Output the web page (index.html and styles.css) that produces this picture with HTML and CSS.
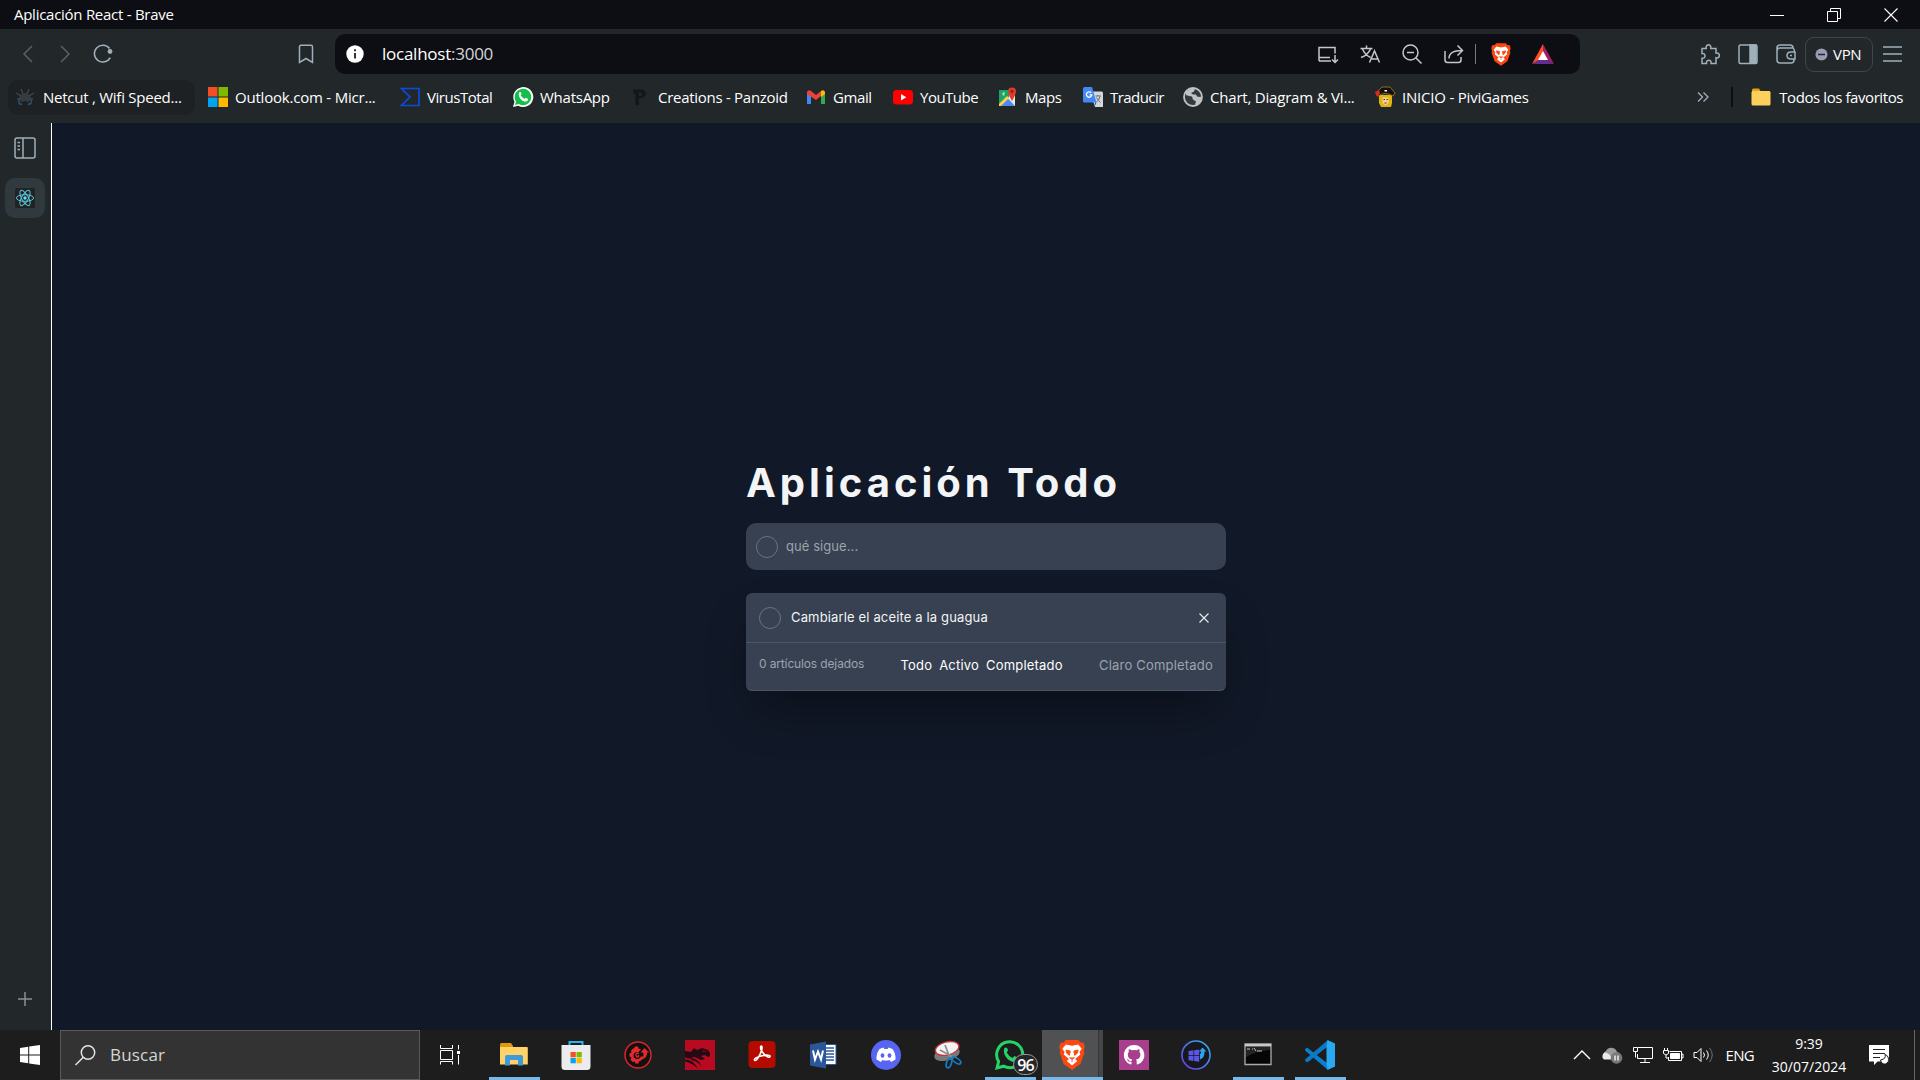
FILE: index.html
```html
<!DOCTYPE html>
<html lang="es">
<head>
<meta charset="utf-8">
<title>Aplicación React</title>
<link rel="stylesheet" href="styles.css">
</head>
<body>
<div class="screen">
  <header class="titlebar">
    <span class="window-title">Aplicación React - Brave</span>
    <div class="window-buttons">
      <svg width="14" height="14" viewBox="0 0 14 14"><path d="M0 7.500h14" stroke="#fff"/></svg>
      <svg width="14" height="14" viewBox="0 0 14 14" fill="none" stroke="#fff"><path d="M.5 3.500h10v10h-10zM3.500 3V.5h10v10H11"/></svg>
      <svg width="14" height="14" viewBox="0 0 14 14"><path d="M.5.5l13 13M13.500.5l-13 13" stroke="#fff" stroke-width="1.100"/></svg>
    </div>
  </header>

  <nav class="toolbar">
    <div class="nav-buttons">
      <svg class="dim" width="20" height="20" viewBox="0 0 20 20"><path d="M15 2L7 10l8 8"/></svg>
      <svg class="dim" width="20" height="20" viewBox="0 0 20 20"><path d="M7 2l8 8-8 8"/></svg>
      <svg class="reload" width="20" height="20" viewBox="0 0 20 20"><path d="M17.200 13.600A8.400 8.400 0 1 1 16.500 4.500" /><circle cx="17" cy="7.500" r="2.400" fill="#9fb0ba" stroke="none"/></svg>
    </div>
    <svg class="save" width="16" height="20" viewBox="0 0 16 20"><path d="M1.500 3Q1.500 1.300 3 1.300h10q1.500 0 1.500 1.700v15.500L8 14.500l-6.500 4z"/></svg>
    <div class="omnibox">
      <svg class="info" width="18" height="18" viewBox="0 0 18 18"><circle cx="9" cy="9" r="8.700" fill="#fff"/><path d="M8 4.300h2v2H8zM8 8h2v5.500H8z" fill="#33343a"/></svg>
      <span class="url">localhost<span class="port">:3000</span></span>
      <div class="omni-actions">
        <svg width="20" height="20" viewBox="0 0 20 20"><path d="M1 13.500V3.500h16v6M1 13.500h11M1 17h12M1 13v4M17 11v7M14 15.500l3 3 3-3"/></svg>
        <svg width="20" height="20" viewBox="0 0 20 20"><path d="M.5 4.500h12M6.500 1.500v3M2.500 5q2.500 6 8 8.500M10.500 5Q8 11 1 13.500M9.500 18.500L14.500 7l5 11.500M11 15h7"/></svg>
        <svg width="20" height="20" viewBox="0 0 20 20"><circle cx="8.500" cy="8.500" r="7.500"/><path d="M5 8.500h7M14 14l5.500 5.500"/></svg>
        <svg width="20" height="20" viewBox="0 0 20 20"><path d="M1 7v9q0 2.500 2.500 2.500h11q2.500 0 2.500-2.500v-3M5 14.500Q5 6.500 18 6.500M13.500 1.500l5 5-5 5"/></svg>
      </div>
      <i class="omni-sep"></i>
      <svg class="shield" width="20" height="23" viewBox="0 0 30 34"><use href="#brave"/></svg>
      <svg class="bat" width="22" height="20" viewBox="0 0 22 20"><path d="M11 0L0 20l7-4 4-8z" fill="#ff4f1f"/><path d="M11 0l11 20-7-4-4-8z" fill="#9e1f63"/><path d="M0 20h22l-7-4H7z" fill="#662d91"/><path d="M11 7l5 9H6z" fill="#fff"/></svg>
    </div>
    <div class="side-actions">
      <svg width="20" height="21" viewBox="0 0 20 21"><path d="M2 4.500h4.200c-1-5 5.600-5 4.600 0H16v4.600c4.500-1 4.500 5.700 0 4.700V19.500h-5c1-4.500-5.300-4.500-4.500 0H2v-5.200c4 .8 4-5.600 0-4.800z"/></svg>
      <svg width="20" height="21" viewBox="0 0 20 21"><rect x="1" y="1" width="18" height="18.500" rx="1.500"/><path d="M12 1h6v18h-6z" fill="#9fb0ba"/></svg>
      <svg width="20" height="21" viewBox="0 0 20 21"><path d="M1 3v13q0 3 3 3h11q3 0 3-3v-1M1 4q0-3 3-3h10q3 0 3 3H4M4 4Q1 4 1 7M17 4q1.500 1 1.500 4M19 8h-4q-4 0-4 3.500t4 3.500h4zM14 11.500h2"/></svg>
    </div>
    <div class="vpn"><svg width="13" height="13" viewBox="0 0 13 13"><circle cx="6.500" cy="6.500" r="6" fill="#9b9cb4"/><path class="dash" d="M3 6.500h7"/></svg><span>VPN</span></div>
    <svg class="menu" width="20" height="16" viewBox="0 0 20 16"><path d="M0 1h19M0 8h19M0 15h19"/></svg>
  </nav>

  <nav class="bookmarks">
    <a class="bm netcut"><svg width="20" height="20" viewBox="0 0 20 20"><path d="M5 8l5-2 5 2 1 4-3 3-3-1-3 1-3-3z" fill="#353b40"/><path d="M6 2l2 5M14 2l-2 5M1 6l5 3M19 6l-5 3M2 12h4M18 12h-4" fill="none" stroke="#41474b" stroke-width="1.300"/><path d="M4 13q-1 5 3 4M16 13q1 5-3 4" fill="none" stroke="#24577c" stroke-width="1.500"/></svg><span>Netcut , Wifi Speed...</span></a>
    <a class="bm outlook"><svg width="20" height="20" viewBox="0 0 20 20"><path d="M0 0h9.500v9.500H0z" fill="#f25022"/><path d="M10.500 0H20v9.500h-9.500z" fill="#7fba00"/><path d="M0 10.500h9.500V20H0z" fill="#00a4ef"/><path d="M10.500 10.500H20V20h-9.500z" fill="#ffb900"/></svg><span>Outlook.com - Micr...</span></a>
    <a class="bm virus"><svg width="20" height="20" viewBox="0 0 20 20"><path d="M1.500 1.500H19v17H1.500L10 10z" fill="none" stroke="#0b4dda" stroke-width="1.700"/></svg><span>VirusTotal</span></a>
    <a class="bm whats"><svg width="20" height="20" viewBox="0 0 20 20"><path d="M0 20l1.500-5.200A10 10 0 1 1 5.300 18.700z" fill="#fff"/><path d="M2 18l1-3.400a8.300 8.300 0 1 1 2.600 2.500z" fill="#12c04a"/><path d="M6.200 5.500c1.500-1 2 0 2.300 1.500L7.700 8.300q1.300 2.600 3.800 3.600l1.200-1.200 2.500 1.200c0 2-2 3-3.700 2.600C8 13.500 4.500 9 6.200 5.500z" fill="#fff"/></svg><span>WhatsApp</span></a>
    <a class="bm panz"><svg width="20" height="20" viewBox="0 0 20 20"><path d="M2 2.500h9q4.500 1 3.500 5.500-1 3.500-6.500 3V18H4.500V6.500H2zM8 5.500v3.500h2.500V5.500z" fill="#141617"/></svg><span>Creations - Panzoid</span></a>
    <a class="bm gmail"><svg width="20" height="20" viewBox="0 0 20 20"><path d="M1 5v12h4V9z" fill="#4285f4"/><path d="M15 9v8h4V5z" fill="#34a853"/><path d="M15 5v5l4-3V5q-1-3-4-1z" fill="#fbbc04"/><path d="M1 7V5q1-3 4-1l5 4 5-4v5l-5 4z" fill="#ea4335"/></svg><span>Gmail</span></a>
    <a class="bm yt"><svg width="20" height="20" viewBox="0 0 20 20"><rect y="3" width="20" height="14.500" rx="3.500" fill="#f00"/><path d="M8 7l5.300 3.200L8 13.400z" fill="#fff"/></svg><span>YouTube</span></a>
    <a class="bm maps"><svg width="20" height="20" viewBox="0 0 20 20"><path d="M1 3h16v16H1z" fill="#e8e8e8"/><path d="M1 3h11l-1 7-10 9z" fill="#1da462"/><path d="M2 19l7.500-8 7.500 8z" fill="#4c8bf5"/><path d="M1 17l8-8 2 2-8 8H1z" fill="#ffd04b"/><path d="M14 14Q10 7 10 4.500a4 4 0 0 1 8 0Q18 7 14 14z" fill="#de3b2c"/><circle cx="14" cy="4.500" r="1.400" fill="#7d1f16"/><path d="M7 6H5v2h1.500" fill="none" stroke="#d8f0e0"/></svg><span>Maps</span></a>
    <a class="bm trad"><svg width="20" height="20" viewBox="0 0 20 20"><path d="M7 4.500h11.500q1.500 0 1.500 1.500v14h-8z" fill="#d5d7da"/><path d="M1.500 0H9l4.500 15.500h-12Q0 15.500 0 14V1.500Q0 0 1.500 0z" fill="#4389f5"/><path d="M12 15.500h1.500L11.500 20z" fill="#1b57c0"/><path d="M8.200 5.800a2.700 2.700 0 1 0 .6 2H6.500" fill="none" stroke="#fff" stroke-width="1.300"/><path d="M12.500 9H18M15 8v1M17 9.500q-1 4-3.500 5.500M13.500 10.500q1.500 3 4 5" fill="none" stroke="#65717c"/></svg><span>Traducir</span></a>
    <a class="bm chart"><svg width="20" height="20" viewBox="0 0 20 20"><circle cx="10" cy="10" r="9" fill="#353a3d" stroke="#bfc3c8" stroke-width="1.800"/><path d="M3 5l4-3 5-.5-1 3-3 1.500 2 1.500 3 0 1 2 3 .5 2-1-1 5-4 4.500-2-1 1-3-3-2-1-3-3-.5-3-1z" fill="#bfc3c8"/></svg><span>Chart, Diagram &amp; Vi...</span></a>
    <a class="bm pivi"><svg width="20" height="20" viewBox="0 0 20 20"><path d="M4 8h13v8l-1 4H6l-2-4z" fill="#e3b50c"/><path d="M7.500 10.500h6V16l-3 2.500-3-2.500z" fill="#f4cf98"/><path d="M2 5l5-5h8l5 6-2 3Q10 4 3 9z" fill="#151010" stroke="#9b7722" stroke-width=".9"/><path d="M0 5l4-2 1 3-3 4z" fill="#d92b20"/><path d="M9.500 3h2.500v1.500H9.500z" fill="#fff"/><path d="M8.500 12.500h1.500M11.500 12.500H13M9.500 16h2" stroke="#5b3515"/></svg><span>INICIO - PiviGames</span></a>
    <svg class="more" width="12" height="12" viewBox="0 0 12 12"><path d="M1 1.500L5.500 6 1 10.500M6.500 1.500L11 6l-4.500 4.500"/></svg>
    <i class="bm-sep"></i>
    <a class="bm all"><svg width="20" height="20" viewBox="0 0 20 20"><path d="M1 3q0-1.500 1.500-1.500H8L9.500 4H18q1 0 1 1v3H1z" fill="#e8a012"/><rect x=".5" y="4" width="19" height="14.500" rx="1.500" fill="#fdd05c"/></svg><span>Todos los favoritos</span></a>
  </nav>

  <div class="body">
    <aside class="tabs">
      <svg class="panel" width="22" height="22" viewBox="0 0 22 22"><rect x="1" y="1" width="20" height="20" rx="2"/><path d="M9 1v20M3.500 5.500H6M3.500 9H6M3.500 12.500H6"/></svg>
      <div class="tab"><svg width="20" height="20" viewBox="0 0 20 20"><rect width="20" height="20" rx="2" fill="#222"/><g fill="none" stroke="#58c4dc" stroke-width="1"><ellipse cx="10" cy="10" rx="8.600" ry="3.300"/><ellipse cx="10" cy="10" rx="8.600" ry="3.300" transform="rotate(60 10 10)"/><ellipse cx="10" cy="10" rx="8.600" ry="3.300" transform="rotate(120 10 10)"/></g><circle cx="10" cy="10" r="1.700" fill="#61dafb"/></svg></div>
      <svg class="add" width="14" height="14" viewBox="0 0 14 14"><path d="M0 7h14M7 0v14" stroke="#8a9094" stroke-width="1.500"/></svg>
    </aside>
    <main class="app">
      <section class="todo">
        <h1>Aplicación Todo</h1>
        <div class="entry"><i class="ring"></i><span>qué sigue...</span></div>
        <div class="card">
          <div class="item"><i class="ring"></i><span>Cambiarle el aceite a la guagua</span>
            <svg width="10" height="10" viewBox="0 0 10 10"><path d="M.5.5l9 9M9.500.5l-9 9" stroke="#eceef1" stroke-width="1.100"/></svg></div>
          <div class="foot">
            <span class="count">0 artículos dejados</span>
            <div class="filters"><span>Todo</span><span>Activo</span><span>Completado</span></div>
            <span class="clear">Claro Completado</span>
          </div>
        </div>
      </section>
    </main>
  </div>

  <footer class="taskbar">
    <div class="start"><svg width="20" height="20" viewBox="0 0 20 20" fill="#fff"><path d="M0 2.900L8.200 1.700v7.800H0zM9.200 1.500L20 0v9.500H9.200zM0 10.500h8.200v7.800L0 17.100zM9.200 10.500H20V20L9.200 18.500z"/></svg></div>
    <div class="search"><svg width="21" height="21" viewBox="0 0 21 21"><circle cx="13" cy="7.500" r="6.700"/><path d="M8.300 12.200L.5 20"/></svg><span>Buscar</span></div>
    <div class="taskview"><svg width="20" height="20" viewBox="0 0 20 20" fill="none" stroke="#fff"><path d="M.5 0v3.500h12V0M.5 19.500v-3h12v3M.5 5.500h12v9H.5zM18.500 0v4.500M18.500 10v9.500"/><path d="M17 6h3v3h-3z" fill="#fff" stroke="none"/></svg></div>
    <div class="apps">
      <div class="app-btn open"><svg width="30" height="30" viewBox="0 0 30 30"><path d="M1 4.500Q1 3 2.500 3H12l2 3v5H1z" fill="#dd9b0a"/><path d="M1 7h27q.8 0 .8 1v16.500H1z" fill="#ffd368"/><path d="M6 25.500V17q0-2 2-2h14q2 0 2 2v8.500h-5V20h-8v5.500z" fill="#3f9add"/></svg></div>
      <div class="app-btn"><svg width="30" height="30" viewBox="0 0 30 30"><path d="M8.500 7V2h13v5" fill="none" stroke="#29b3ee" stroke-width="2"/><path d="M.5 5h29v21.500Q29.500 30 26 30H4Q.5 30 .5 26.500z" fill="#ececee"/><path d="M9.500 12h5.300v5.300H9.500z" fill="#f25022"/><path d="M15.500 12h5.300v5.300h-5.300z" fill="#7fba00"/><path d="M9.500 18h5.300v5.300H9.500z" fill="#00a4ef"/><path d="M15.500 18h5.300v5.300h-5.300z" fill="#ffb900"/></svg></div>
      <div class="app-btn"><svg width="30" height="30" viewBox="0 0 30 30"><circle cx="15" cy="15" r="13" fill="#111" stroke="#db2428" stroke-width="1.500"/><path d="M11 8.500l1-2h3l.5 2 2.500 1-3 3q-4-1-4.500 2.500t3.500 4q3 0 4-2.500h3q-1.500 4-5 5l-.5 2h-3l-1-2-2 .5-2-2.500 1-2-2-1v-3l2-1-.5-2 2-2z" fill="#e6282d"/><path d="M18.500 19.500q3-3 1.500-7h-2.500l4-4.500 4.500 4.500h-2q.5 5.500-5.500 7z" fill="#e6282d"/><path d="M16 13.500q-3-1-3 1.500t2.500 1.700V15" fill="none" stroke="#e6282d" stroke-width="1.300"/></svg></div>
      <div class="app-btn"><svg width="30" height="30" viewBox="0 0 30 30"><path d="M0 0h30v30H0z" fill="#b80b22"/><path d="M0 11l6 1 3-4 3 2 5-2 6 2 2 3v3l-2 1-3-2-4 1 4 3-4 1q-5-3-8-3-4 3-8 0zM0 19.500q9 0 13 10-4-6-13-8zM6 18q8 1 11 9-4-6-11-7z" fill="#250914"/><path d="M17 10l5 2-4 0z" fill="#850c20"/></svg></div>
      <div class="app-btn"><svg width="30" height="30" viewBox="0 0 30 30"><rect x="1.500" y="1" width="27" height="27" rx="4" fill="#b30b00"/><path d="M8 20.500c-2-1 1-3.500 7-4.800 5-1 8.500-.7 8 1-1 2-6-1.700-8.500-6-1.500-3-1-5 0-4.500 1.500 1-.5 7-3 11-1.500 2.500-2.700 3.700-3.500 3.300z" fill="none" stroke="#fff" stroke-width="1.600"/></svg></div>
      <div class="app-btn"><svg width="30" height="30" viewBox="0 0 30 30"><path d="M15 4.500h12v20H15z" fill="#fff" stroke="#2b579a"/><path d="M17 8h8M17 11h8M17 14h8M17 17h8M17 20h8" stroke="#2b579a" stroke-width="1.300"/><path d="M1 4.500L17 1.500v27L1 25.500z" fill="#2b579a"/><path d="M4 10.500l2 9 3-8 3 8 2-9" fill="none" stroke="#fff" stroke-width="2"/></svg></div>
      <div class="app-btn"><svg width="30" height="30" viewBox="0 0 30 30"><circle cx="15" cy="15" r="15" fill="#5865f2"/><path d="M8.500 9l4-1.500.8 1.500h3.400l.8-1.500L21.500 9Q25 14 24.500 19.500L20 22l-1.300-2q-3.700 1-7.400 0L10 22l-4.500-2.500Q5 14 8.500 9z" fill="#fff"/><ellipse cx="11.500" cy="15.500" rx="1.900" ry="2.200" fill="#5865f2"/><ellipse cx="18.500" cy="15.500" rx="1.900" ry="2.200" fill="#5865f2"/></svg></div>
      <div class="app-btn"><svg width="30" height="30" viewBox="0 0 30 30"><ellipse cx="14" cy="14" rx="13" ry="6.500" fill="#77797d" transform="rotate(-14 14 14)"/><ellipse cx="14" cy="8.500" rx="12" ry="6.500" fill="#f3f3f4" stroke="#c9343b" stroke-width="1.300" transform="rotate(-14 14 8)"/><path d="M12 5l5 13M7 10l13 7" stroke="#8b8d90" stroke-width="1.700"/><g fill="none" stroke="#1579bd" stroke-width="1.800"><ellipse cx="16" cy="23" rx="2.400" ry="5" transform="rotate(18 16 23)"/><ellipse cx="23.500" cy="20.500" rx="2.300" ry="5" transform="rotate(-55 23.500 20.500)"/></g></svg></div>
      <div class="app-btn open"><svg width="30" height="30" viewBox="0 0 30 30"><path d="M2 28l1.600-6.500a13 13 0 1 1 5 4.700z" fill="none" stroke="#25d366" stroke-width="3"/><path d="M9.500 8c2-1.500 3 0 3.500 2.500L11.800 12.500q2 4 5.700 5.500l2-2 3.500 1.800c0 3-3 4.500-5.500 4C12 20.500 7 13 9.500 8z" fill="#25d366"/></svg><b class="badge">96</b></div>
      <div class="app-btn active"><svg width="30" height="30" viewBox="0 0 30 30"><g transform="scale(.88) translate(2.100 0)"><g id="brave"><path d="M8 0h14l3 3 3-.3 1.500 5-1 4 .5 3-4.500 12.500L15 34 5.500 27.200 1 14.700l.5-3-1-4L2 2.700 5 3z" fill="#fb4712"/><path d="M8 5l7 1.500L22 5l4 5-2.500 3.500 1 3-6 5L21 24l-6 5-6-5 2.500-2.500-6-5 1-3L4 10z" fill="#fff"/><path d="M8 11.500l5 1-1 5-3-2.500zM22 11.500l-5 1 1 5 3-2.500zM12 20l3 2 3-2M15 22v3" fill="#fb4712" stroke="#fb4712" stroke-width="1"/></g></g></svg></div>
      <div class="app-btn"><svg width="30" height="30" viewBox="0 0 30 30"><path d="M0 0h30v30H0z" fill="#a93e8c"/><path d="M15 5a10 10 0 0 0-3.300 19.500c.6.100.8-.3.800-.7v-2c-3 .6-3.700-1.300-3.700-1.300-.5-1.200-1.200-1.500-1.200-1.500 1.500-.5 2 .7 2.300 1.200.9 1.500 2.200 1 2.700.7.100-.7.400-1.100.7-1.300-3-.5-4.500-2-4.500-5 0-1.200.4-2 1-2.700-.2-.7-.3-1.600.1-2.700 1 0 2 .6 2.700 1.100a9 9 0 0 1 5 0c.7-.5 1.700-1.100 2.700-1.100.4 1.100.3 2 .1 2.700.6.700 1 1.500 1 2.700 0 3-1.500 4.500-4.500 5 .4.400.8 1 .8 2v2.200c0 .4.200.8.800.7A10 10 0 0 0 15 5z" fill="#fff"/></svg></div>
      <div class="app-btn"><svg width="30" height="30" viewBox="0 0 30 30"><defs><linearGradient id="dh" x1="0" y1="1" x2="1" y2="0"><stop offset="0" stop-color="#7038e8"/><stop offset="1" stop-color="#2bb7ee"/></linearGradient></defs><circle cx="15" cy="15" r="14" fill="#17171e" stroke="url(#dh)" stroke-width="1.600"/><path d="M7.500 11l5-.7v5h-5zM13.200 10.200l5-.7v5.800h-5zM7.500 16h5v5l-5-.7zM13.200 16h5v5.800l-5-.7z" fill="#5a57e6"/><path d="M19 19.500V14q1.500-1 1-2.500h-2l3.500-4 4 4H23.500q.5 6-4.500 8z" fill="#2aa3ea"/></svg></div>
      <div class="app-btn open"><svg width="30" height="30" viewBox="0 0 30 30"><path d="M2 4h26v20.500H2z" fill="#060606" stroke="#a9adb0" stroke-width="1.300"/><path d="M2 4h26v2.500H2z" fill="#c5c8ca"/><path d="M4 9h3M9 9h1M11 8l2 3M14 11h5" stroke="#bbb"/><path d="M3 17q10-6 24-7V7H3z" fill="#fff" opacity=".12"/></svg></div>
      <div class="app-btn open"><svg width="30" height="30" viewBox="0 0 30 30"><path d="M2 7.500L22 23l1 7L0 10.500Q-.5 9 2 7.500z" fill="#0a7fd0"/><path d="M0 19.500L23 0l-1 7L3 22q-1 .5-2.500-.8z" fill="#0b78c6"/><path d="M22.500 0L30 3.500v23L22.500 30l-1-6V6z" fill="#29a9f2"/></svg></div>
    </div>
    <div class="tray">
      <svg width="18" height="10" viewBox="0 0 18 10"><path d="M1 9l8-8 8 8" stroke-width="1.400"/></svg>
      <svg width="22" height="18" viewBox="0 0 22 18"><g stroke="none"><path d="M4 12a4 4 0 0 1 1-7 6 6 0 0 1 11 1q5 1 4 7z" fill="#9a9b9c"/><path d="M3 13.500a4 4 0 0 1 1-7q4 0 8 7z" fill="#e9e9e9"/><circle cx="15.500" cy="12" r="5.800" fill="#777"/></g><path d="M14 9.500v5M17 9.500v5" stroke-width="1.300"/></svg>
      <svg width="20" height="18" viewBox="0 0 20 18"><path d="M5 1.500h14.500v11H4.500V8M12 12.500v4M7 16.500h10M.5 1.500h4v4h-4zM2.500 5.500v6"/></svg>
      <svg width="20" height="18" viewBox="0 0 20 18"><path d="M6.500 5.500H18.500v9H5.500V11M18.500 8H20v4h-1.500M.5 4.500h5v3q-2.500 3-5 0zM1.500 2v2M4.500 2v2M3 9v3h2"/><path d="M7.500 7.500h9v5h-9z" fill="#fff"/></svg>
      <svg width="21" height="18" viewBox="0 0 21 18"><path d="M1 6.500h3l4-4v13l-4-4H1zM10.500 6.500q2 2.500 0 5M13.500 4.500q3.500 4.500 0 9"/><path d="M16.500 2q5.500 7 0 14" stroke="#737373"/></svg>
      <span class="lang">ENG</span>
      <div class="clock"><span>9:39</span><span>30/07/2024</span></div>
      <svg class="note" width="20" height="21" viewBox="0 0 20 21"><path d="M0 0h20v16.500H8.500L5 20v-3.500H0z" fill="#fff" stroke="none"/><path d="M4 4.500h12M4 8.500h12M4 12.500h7" stroke="#222"/><path d="M16 9.500q1.500 4.500-4.500 5.500 1 4.500 5 4 4.500-2 2.500-7-1-2-3-2.500z" fill="#fff" stroke="#1c1c1c"/></svg>
      <i class="peek"></i>
    </div>
  </footer>
</div>
</body>
</html>
```
FILE: styles.css
```css
* { box-sizing: border-box; }
body { margin: 0; background: #111827; }
svg { display: block; flex: none; overflow: visible; }
.screen { width: 1920px; height: 1080px; display: flex; flex-direction: column; overflow: hidden; font: 15px/20px "Open Sans", "Noto Sans", sans-serif; color: #fff; white-space: nowrap; }

.titlebar { height: 29px; background: #0d0e13; display: flex; align-items: center; justify-content: space-between; padding: 0 22px 0 14px; }
.window-title { letter-spacing: -.27px; margin-top: -1px; }
.window-buttons { display: flex; gap: 43px; }

.toolbar { height: 45px; padding-top: 5px; background: #22272a; display: flex; align-items: center; }
.toolbar svg { fill: none; stroke: #9fb0ba; stroke-width: 1.5; }
.nav-buttons { display: flex; align-items: center; gap: 17px; margin-left: 17px; width: 281px; }
.nav-buttons .dim { stroke: #596167; }
.reload { margin-left: 2px; }
.omnibox { width: 1245px; height: 40px; margin-left: 21px; border-radius: 10px; background: #0d0e13; display: flex; align-items: center; padding: 0 26px 0 11px; }
.omnibox .info, .omnibox .shield, .omnibox .bat { stroke: none; }
.url { margin-left: 18px; font-size: 17px; letter-spacing: -.25px; }
.port { color: #d3d5d9; }
.omni-actions { display: flex; gap: 22px; margin-left: auto; }
.omnibox .omni-actions svg { stroke: #c3c6ca; }
.omni-sep { width: 1px; height: 20px; background: #777b80; margin: 0 15px 0 11px; }
.omnibox .bat { margin-left: 21px; }
.side-actions { display: flex; gap: 18px; margin-left: 120px; }
.vpn { width: 68px; height: 35px; margin-left: 9px; border: 1px solid #3b484d; border-radius: 9px; display: flex; align-items: center; gap: 5px; padding-left: 9px; letter-spacing: -.3px; }
.toolbar .vpn svg { stroke: none; }
.dash { stroke: #22272a; stroke-width: 1.5; }
.menu { margin-left: 10px; }

.bookmarks { height: 49px; background: #22272a; display: flex; align-items: center; padding: 0 17px 3px 8px; }
.bm { display: flex; align-items: center; gap: 7px; height: 35px; }
.bm span { margin-top: -1px; }
.netcut { width: 187px; padding-left: 7px; gap: 8px; background: #1d2123; border-radius: 10px; margin-right: 13px; letter-spacing: -.25px; }
.outlook { width: 192px; letter-spacing: -.21px; }
.virus { width: 113px; letter-spacing: -.45px; }
.whats { width: 118px; letter-spacing: -.25px; }
.panz { width: 175px; letter-spacing: -.28px; }
.gmail { width: 87px; letter-spacing: -.4px; }
.yt { width: 105px; letter-spacing: -.5px; }
.maps { width: 85px; letter-spacing: -.4px; }
.trad { width: 100px; letter-spacing: -.55px; }
.chart { width: 192px; letter-spacing: -.2px; }
.pivi { letter-spacing: -.2px; }
.more { margin-left: auto; fill: none; stroke: #9fb0ba; stroke-width: 1.3; }
.bm-sep { width: 2px; height: 20px; background: #0d0e13; margin: 0 18px 0 22px; }
.all { gap: 8px; letter-spacing: -.42px; }

.body { flex: 1; display: flex; min-height: 0; }
.tabs { width: 52px; background: #22272a; border-right: 1px solid #fff; display: flex; flex-direction: column; padding: 14px 0 24px 5px; }
.panel { margin-left: 9px; fill: none; stroke: #9fb0ba; stroke-width: 1.5; }
.tab { width: 40px; height: 40px; margin-top: 19px; border-radius: 10px; background: #2f393e; display: flex; align-items: center; justify-content: center; }
.add { margin: auto 0 0 13px; }

.app { flex: 1; background: #111827; display: flex; justify-content: center; font-family: Inter, sans-serif; padding-top: 336px; }
.todo { width: 480px; }
.todo h1 { margin: 0; height: 64px; font-size: 40px; line-height: 48px; font-weight: 700; letter-spacing: 4px; color: #f3f4f6; }
.entry { height: 47px; border-radius: 10px; background: #374151; color: #9ca3af; font-size: 13px; display: flex; align-items: center; padding-left: 10px; gap: 8px; letter-spacing: .07px; }
.entry span { margin-top: -1px; }
.ring { width: 22px; height: 22px; border: 1px solid #6b7280; border-radius: 50%; }
.card { height: 98px; margin-top: 23px; border-radius: 6px; background: #374151; border-bottom: 1px solid #4b5563; box-shadow: 0 25px 50px -12px rgba(0,0,0,.4); font-size: 13px; }
.item { height: 50px; border-bottom: 1px solid #4b5563; display: flex; align-items: center; padding: 0 17px 0 13px; gap: 10px; color: #f3f4f6; letter-spacing: .15px; }
.item span { margin-top: -2px; }
.item svg { margin-left: auto; }
.foot { height: 44px; display: flex; align-items: center; justify-content: space-between; padding: 0 13px; color: #9ca3af; letter-spacing: .2px; }
.count { font-size: 12px; letter-spacing: -.14px; margin-bottom: 3px; }
.filters { display: flex; gap: 7px; color: #fff; }

.taskbar { height: 50px; background: #1d1d1e; display: flex; }
.start { width: 60px; display: flex; align-items: center; justify-content: center; }
.search { width: 360px; background: #333; border: 1px solid #5b5b5b; display: flex; align-items: center; gap: 14px; padding-left: 14px; font-size: 17px; color: #d6d6d6; letter-spacing: .2px; }
.search svg { fill: none; stroke: #e4e4e4; stroke-width: 1.5; }
.taskview { width: 61px; display: flex; align-items: center; padding-left: 20px; }
.apps { display: flex; margin-left: 2px; }
.app-btn { position: relative; width: 62px; display: flex; align-items: center; justify-content: center; }
.open::after { content: ""; position: absolute; left: 6px; bottom: 0; width: 51px; height: 3px; background: #76b9ed; }
.active { background: linear-gradient(90deg, transparent 1px, #505153 1px 57px, #353637 57px 58px, #454647 58px 62px); }
.active::after { content: ""; position: absolute; left: 1px; bottom: 0; width: 61px; height: 3px; background: #76b9ed; }
.badge { position: absolute; left: 34px; bottom: 5px; width: 25px; height: 21px; border: 1px solid #999; border-radius: 11px; background: #252627; font: 600 16px/20px "Open Sans", sans-serif; text-align: center; letter-spacing: -1px; }
.tray { margin-left: auto; display: flex; align-items: center; }
.tray svg { fill: none; stroke: #fff; margin-right: 10px; }
.lang { margin-left: 2px; letter-spacing: -.7px; }
.clock { width: 76px; margin-left: 17px; line-height: 23px; display: flex; flex-direction: column; align-items: center; font-size: 14px; margin-top: -1px; }
.tray .note { margin: 0 25px 0 22px; }
.peek { width: 1px; height: 50px; background: #666; margin-right: 5px; }
```
